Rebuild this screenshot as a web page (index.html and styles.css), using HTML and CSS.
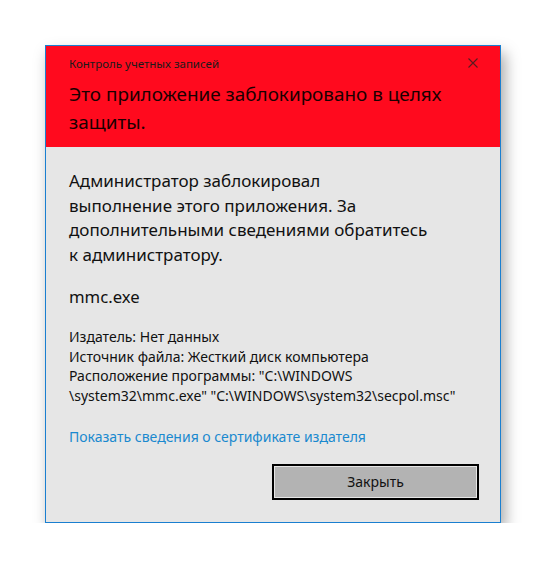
FILE: index.html
```html
<!DOCTYPE html>
<html lang="ru">
<head>
<meta charset="utf-8">
<link rel="stylesheet" href="styles.css">
</head>
<body>
<div class="dialog">
  <div class="header">
    <div class="titlebar">
      <span class="title">Контроль учетных записей</span>
      <svg class="close" width="10" height="10" viewBox="0 0 10 10"><path d="M0.5 0.5 L9.5 9.5 M9.5 0.5 L0.5 9.5" stroke="#5a1a20" stroke-width="1.1" fill="none"/></svg>
    </div>
    <div class="heading">Это приложение заблокировано в целях защиты.</div>
  </div>
  <div class="content">
    <p class="message">Администратор заблокировал<br>выполнение этого приложения. За<br>дополнительными сведениями обратитесь<br>к администратору.</p>
    <p class="app">mmc.exe</p>
    <p class="details">Издатель: Нет данных<br>Источник файла: Жесткий диск компьютера<br>Расположение программы: "C:\WINDOWS<br>\system32\mmc.exe" "C:\WINDOWS\system32\secpol.msc"</p>
    <a class="link" href="#">Показать сведения о сертификате издателя</a>
    <div class="actions">
      <button class="btn">Закрыть</button>
    </div>
  </div>
</div>
</body>
</html>
```
FILE: styles.css
```css
html, body { margin: 0; padding: 0; background: #ffffff; }
body {
  font-family: "Noto Sans", "Open Sans", sans-serif;
  padding: 45px 0 0 45px;
}
.dialog {
  width: 454px;
  border: 1px solid #1a7fd0;
  background: #e6e6e6;
  box-shadow: 4px 8px 14px rgba(0,0,0,0.35);
}
.header {
  background: #ff0a1e;
  padding: 8px 22px 11px 23px;
}
.titlebar {
  display: flex;
  justify-content: space-between;
  align-items: center;
  height: 18px;
}
.title { font-size: 11.5px; color: #1a1a1a; }
.heading {
  font-size: 18.9px;
  line-height: 28px;
  color: #1a0000;
  margin-top: 8px;
  width: 390px;
}
.content {
  padding: 22px 21px 22px 23px;
}
.message {
  margin: 0;
  font-size: 17px;
  line-height: 24.5px;
  color: #111;
}
.app {
  margin: 18px 0 0;
  font-size: 16.7px;
  line-height: 24px;
  color: #111;
}
.details {
  margin: 18px 0 0;
  font-size: 14px;
  line-height: 19.7px;
  color: #111;
}
.link {
  display: block;
  margin-top: 21px;
  font-size: 14px;
  line-height: 20px;
  color: #1a89cf;
  text-decoration: none;
}
.actions {
  display: flex;
  justify-content: flex-end;
  margin-top: 17px;
}
.btn {
  width: 207px;
  height: 36px;
  border: 2px solid #000;
  background: #b3b3b3;
  box-shadow: inset 0 0 0 1px #e6e6e6;
  font-family: "Noto Sans", "Open Sans", sans-serif;
  font-size: 14px;
  color: #111;
  padding: 0;
}
```
